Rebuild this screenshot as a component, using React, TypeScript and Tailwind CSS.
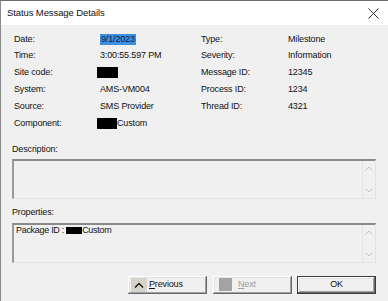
import React from "react";

function Black({ w }: { w: number }) {
  return <span className={w === 21 ? "inline-block w-[21px] h-[11px] bg-black -ml-[3px] align-middle" : "inline-block w-[20px] h-[11px] bg-black -ml-[3px] align-middle"} />;
}

function Chevron({ up }: { up: boolean }) {
  return (
    <svg width="8" height="5" viewBox="0 0 8 5">
      <path d={up ? "M0.5 4.5 L4 1 L7.5 4.5" : "M0.5 0.5 L4 4 L7.5 0.5"} fill="none" stroke="#c4c4c4" strokeWidth="1" />
    </svg>
  );
}

function Box({ children }: { children?: React.ReactNode }) {
  return (
    <div className="ml-[11px] mr-[12px] h-[40px] flex border-t-2 border-l-2 border-t-[#8a8a8a] border-l-[#9a9a9a] border-r border-b border-r-[#e2e2e2] border-b-[#e2e2e2]">
      <div className="flex-1 pl-[2px] pt-[0px] leading-[11px]">{children}</div>
      <div className="w-[13px] border-l border-l-[#e4e4e4] flex flex-col items-center justify-between pt-[5px] pb-[5px]">
        <Chevron up />
        <Chevron up={false} />
      </div>
    </div>
  );
}

const raised =
  "shadow-[inset_-1px_-1px_0_#696969,inset_1px_1px_0_#ffffff,inset_-2px_-2px_0_#a0a0a0,inset_2px_2px_0_#e3e3e3]";

export default function App() {
  const left: [string, React.ReactNode][] = [
    ["Date:", <span className="bg-[#3d8fe0] text-[#0c1d4d] px-[1px] leading-[11px] inline-block">9/1/2023</span>],
    ["Time:", "3:00:55.597 PM"],
    ["Site code:", <Black w={21} />],
    ["System:", "AMS-VM004"],
    ["Source:", "SMS Provider"],
    ["Component:", <span className="inline-flex items-center"><Black w={20} />Custom</span>],
  ];
  const right: [string, string][] = [
    ["Type:", "Milestone"],
    ["Severity:", "Information"],
    ["Message ID:", "12345"],
    ["Process ID:", "1234"],
    ["Thread ID:", "4321"],
    ["", ""],
  ];
  return (
    <div className="w-[388px] h-[301px] bg-[#f0f0f0] border-l border-t border-l-[#8a8a8a] border-t-[#6e6e6e] flex flex-col font-['Liberation_Sans',Arial,sans-serif] text-[9px] tracking-[-0.15px] text-[#111] overflow-hidden">
      <div className="h-[24px] bg-white flex items-center justify-between pl-[6px] pr-[9px] shrink-0">
        <span className="text-[9.5px] tracking-[-0.1px]">Status Message Details</span>
        <svg width="11" height="11" viewBox="0 0 11 11">
          <path d="M0.5 0.5 L10.5 10.5 M10.5 0.5 L0.5 10.5" stroke="#333" strokeWidth="1" />
        </svg>
      </div>
      <div className="pt-[6px] pl-[13px] grid grid-cols-[86px_101px_87px_1fr]">
        {left.map((l, i) => (
          <React.Fragment key={i}>
            <div className="h-[16.8px] flex items-center">{l[0]}</div>
            <div className="h-[16.8px] flex items-center">{l[1]}</div>
            <div className="h-[16.8px] flex items-center">{right[i][0]}</div>
            <div className="h-[16.8px] flex items-center">{right[i][1]}</div>
          </React.Fragment>
        ))}
      </div>
      <div className="mt-[12px] pl-[11px] leading-[11px]">Description:</div>
      <div className="mt-[4px]">
        <Box />
      </div>
      <div className="mt-[8px] pl-[11px] leading-[11px]">Properties:</div>
      <div className="mt-[5px]">
        <Box>
          <span className="inline-flex items-center tracking-[-0.3px]">
            Package ID :&nbsp;<span className="inline-block w-[16px] h-[7px] bg-black" />Custom
          </span>
        </Box>
      </div>
      <div className="mt-[13px] flex justify-end pr-[12px]">
        <div className={`w-[79px] h-[18px] flex items-center pl-[3px] ${raised}`}>
          <div className="w-[16px] h-[14px] bg-[#d6d3cc] flex items-center justify-center">
            <svg width="10" height="6" viewBox="0 0 10 6">
              <path d="M1 5.5 L5 1.5 L9 5.5" fill="none" stroke="#111" strokeWidth="1.4" />
            </svg>
          </div>
          <span className="ml-[2px]"><span className="underline">P</span>revious</span>
        </div>
        <div className={`ml-[6px] w-[79px] h-[18px] flex items-center pl-[6px] ${raised}`}>
          <div className="w-[13px] h-[13px] bg-[#a3a3a3]" />
          <span className="ml-[6px] text-[#a0a0a0]"><span className="underline">N</span>ext</span>
        </div>
        <div className={`ml-[5px] w-[79px] h-[18px] flex items-center justify-center border border-[#3c3c3c] ${raised}`}>
          OK
        </div>
      </div>
    </div>
  );
}
